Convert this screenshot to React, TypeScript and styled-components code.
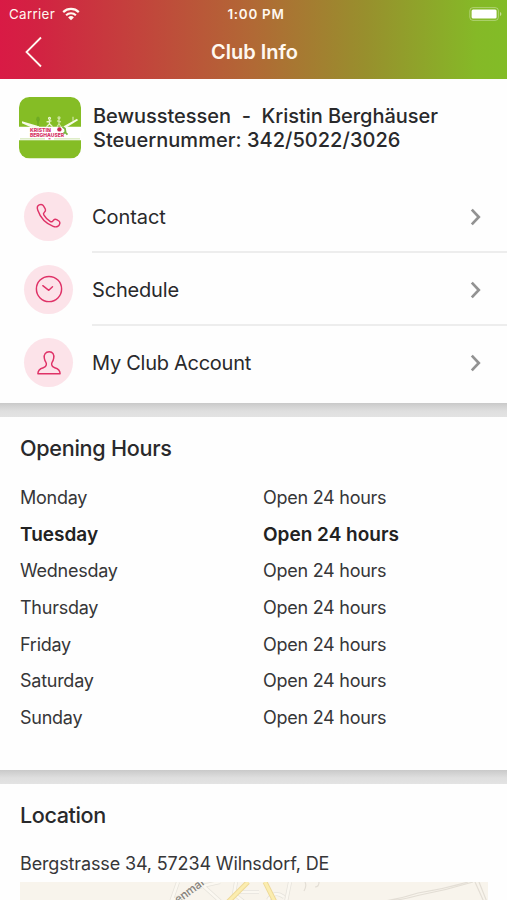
import React from "react";
import styled, { createGlobalStyle } from "styled-components";

const GlobalStyle = createGlobalStyle`
  * { box-sizing: border-box; }
  html, body { margin: 0; padding: 0; height: 900px; overflow: hidden; }
  body {
    background: #fff;
    color: #29292b;
    font-family: Inter, "Liberation Sans", sans-serif;
  }
`;

const Screen = styled.div`
  width: 507px;
  height: 900px;
  overflow: hidden;
  background: #fefefe;
`;

const Header = styled.header`
  height: 79px;
  color: #fff8f0;
  background: linear-gradient(90deg, #d91a45 0%, #d22342 8%, #b16935 50%, #988f2d 72%, #85b927 94%, #82bc27 100%);
`;

const StatusBar = styled.div`
  height: 27px;
  display: grid;
  grid-template-columns: 1fr auto 1fr;
  align-items: center;
  padding: 0 6px 0 9px;
  font-size: 13.4px;
  line-height: 26px;
`;

const Carrier = styled.div`
  display: flex;
  align-items: center;
  gap: 7px;
  letter-spacing: 0.3px;
`;

const Clock = styled.div`
  padding-left: 2px;
  font-weight: 600;
  letter-spacing: 0.75px;
`;

const BatterySlot = styled.div`
  display: flex;
  justify-content: flex-end;
  margin-right: -1px;
`;

const NavBar = styled.div`
  height: 52px;
  display: grid;
  grid-template-columns: 60px 1fr 60px;
  align-items: center;
`;

const BackButton = styled.button`
  border: 0;
  background: none;
  color: inherit;
  height: 50px;
  margin-bottom: 2px;
  padding: 0 0 0 24px;
  display: flex;
  align-items: center;
`;

const NavTitle = styled.h1`
  margin: 0;
  padding-left: 2px;
  text-align: center;
  font-size: 20px;
  font-weight: 600;
  line-height: 50px;
  margin-bottom: 2px;
`;

const Panel = styled.section<{ $height: number }>`
  height: ${(p) => p.$height}px;
`;

const Divider = styled.div`
  height: 14px;
  background: linear-gradient(#c9c9c9 0, #d2d2d2 3px, #dfdfdf 8px, #e3e3e3 14px);
`;

const ClubCard = styled.div`
  display: flex;
  gap: 12px;
  padding: 18px 0 0 19px;
  height: 100.5px;
`;

const ClubName = styled.div`
  padding-top: 7px;
  font-size: 20px;
  font-weight: 500;
  line-height: 24.4px;
  white-space: pre;
`;

const NameLine = styled.div<{ $spacing: number }>`
  letter-spacing: ${(p) => p.$spacing}px;
`;

const MenuRow = styled.a`
  height: 73.25px;
  display: flex;
  padding-left: 24px;
  gap: 19px;
  align-items: center;
`;

const IconDisc = styled.div`
  width: 49px;
  height: 49px;
  flex: none;
  border-radius: 50%;
  background: #fce3e9;
  display: flex;
  align-items: center;
  justify-content: center;
`;

const MenuBody = styled.div<{ $line: boolean; $spacing: number }>`
  flex: 1;
  align-self: stretch;
  display: flex;
  align-items: center;
  justify-content: space-between;
  padding: ${(p) => (p.$line ? "3px" : "0")} 26px 0 0;
  font-size: 20px;
  letter-spacing: ${(p) => p.$spacing}px;
  border-bottom: ${(p) => (p.$line ? "2px solid #ededed" : "none")};
`;

const Heading = styled.h2<{ $spacing: number }>`
  margin: 0;
  padding: 18px 20px 0;
  font-size: 21.6px;
  font-weight: 500;
  line-height: 27px;
  letter-spacing: ${(p) => p.$spacing}px;
`;

const HoursList = styled.div`
  padding: 17px 20px 0;
`;

const HoursRow = styled.div<{ $today: boolean }>`
  display: grid;
  grid-template-columns: 243px 1fr;
  height: 36.65px;
  line-height: 37px;
  font-size: ${(p) => (p.$today ? 19 : 18)}px;
  font-weight: ${(p) => (p.$today ? 600 : 400)};
  letter-spacing: ${(p) => (p.$today ? 0 : -0.26)}px;
  color: ${(p) => (p.$today ? "#222" : "#363638")};
`;

const Address = styled.div`
  padding: 22px 20px 0;
  height: 53px;
  font-size: 18px;
  line-height: 26px;
  letter-spacing: -0.14px;
  color: #363638;
`;

const MapView = styled.div`
  margin: 0 19px 0 20px;
  height: 18px;
  overflow: hidden;
  background: #f8f4ec;
  svg { display: block; }
`;

const Wifi = () => (
  <svg width="18" height="14" viewBox="0 0 18 14" fill="none" stroke="currentColor">
    <path d="M1.2 5.1a11.2 11.2 0 0 1 15.6 0" strokeWidth="2.2" />
    <path d="M4.1 8.2a7 7 0 0 1 9.8 0" strokeWidth="2.1" />
    <path d="M9 13.2 6.1 10.5a4.1 4.1 0 0 1 5.8 0Z" fill="currentColor" stroke="none" />
  </svg>
);

const Battery = () => (
  <svg width="33" height="14" viewBox="0 0 33 14">
    <rect x="0.8" y="0.6" width="28.6" height="12.8" rx="3.2" fill="none" stroke="#fff" strokeOpacity=".35" />
    <rect x="2.6" y="2.5" width="25" height="9" rx="1.5" fill="#fff" />
    <path d="M31 5v4q1.4-.6 1.4-2T31 5Z" fill="#fff" opacity=".5" />
  </svg>
);

const ClubLogo = () => (
  <svg width="62" height="61.5" viewBox="0 0 62 62" preserveAspectRatio="none">
    <defs>
      <clipPath id="logo-shape"><rect width="62" height="62" rx="10.5" /></clipPath>
    </defs>
    <g clipPath="url(#logo-shape)">
      <rect width="62" height="62" fill="#85bd25" />
      <path d="M0 30H62V43.5H0Z" fill="#fff" />
      <path d="M3 24.5 20 29.5V31H13L3 26.5ZM59 23.5 47 31h-5l16-9Z" fill="#f7fbe9" />
      <path d="M19 29v-6" stroke="#67a322" strokeWidth="1.1" />
      <ellipse cx="19" cy="22.5" rx="1.8" ry="2.8" fill="#6fab24" />
      <g stroke="#e9f5ce" strokeWidth="1.2" fill="none">
        <circle cx="30.5" cy="21.5" r="1" /><path d="M30.5 23v4l-3 3m3-3 3 3m-6-5 5-1" />
        <g opacity=".75"><circle cx="40" cy="21" r="1" /><path d="M40 22v5l-2 3m2-3 2 3m-4-6 4 1M54 20v4" /></g>
      </g>
      <g fill="#d53365" fontFamily="Inter, sans-serif" fontWeight="800" fontSize="5.2">
        <text x="11" y="35.1" textLength="21" lengthAdjust="spacingAndGlyphs">KRISTIN</text>
        <text x="11" y="40.3" textLength="34" lengthAdjust="spacingAndGlyphs">BERGHÄUSER</text>
      </g>
      <circle cx="40.4" cy="32.7" r="2.2" fill="#c72c50" />
      <path d="m43.5 30 2.5 2 .5 3-2 2m2-1 2 2" stroke="#79b63e" strokeWidth="1.8" fill="none" />
      <path d="M1 42.2h25m9 0h26" stroke="#b5d780" strokeWidth=".7" />
      <path d="M29.5 42.1h2" stroke="#d53365" />
    </g>
  </svg>
);

const strokeProps = {
  fill: "none",
  stroke: "#df3267",
  strokeWidth: 1.45,
  strokeLinecap: "round" as const,
  strokeLinejoin: "round" as const,
};

const Phone = () => (
  <svg width="28" height="28" viewBox="0 0 28 28" {...strokeProps}>
    <path d="M4.2 2.9C2.1 3.8 1.9 5.8 2.8 8.3c2.4 7 8.2 13.3 15.4 16.1 3.2 1.2 6-.1 6.6-2.8.3-1.2-.1-2-.9-2.6l-2.2-1.3c-1-.6-2.2-.5-3 .3l-1.1 1.2c-.7.7-1.7.8-2.5.2-2.7-1.7-4.7-3.9-6.3-6.6-.5-.8-.3-1.7.4-2.3.9-.7 1.6-1.5 1.3-2.8-.2-1.1-1.1-2.4-1.8-3.5-.9-1.5-2.5-2.1-4.5-1.3Z" />
  </svg>
);

const ClockIcon = () => (
  <svg width="28" height="28" viewBox="0 0 28 28" {...strokeProps}>
    <circle cx="14" cy="14" r="12.6" />
    <path d="m7.8 10.7 6 4.6 3.7-3.5" />
  </svg>
);

const Person = () => (
  <svg width="28" height="28" viewBox="0 0 28 28" {...strokeProps}>
    <path d="M14.2 2.7c-3.7 0-5.5 2.9-4.9 6.4.3 1.8.8 3 1.5 4 .6 1 .7 1.7.5 2.8-.2 1.4-1.2 2.3-3 2.8-3.4 1-5.4 2.4-5.4 6h22.2c0-3.6-2-5-5.4-6-1.8-.5-2.8-1.4-3-2.8-.2-1.1-.1-1.8.5-2.8.7-1 1.2-2.2 1.5-4 .6-3.5-.8-6.4-4.5-6.4Z" />
  </svg>
);

const Chevron = () => (
  <svg width="11" height="18" viewBox="0 0 11 18" fill="none" stroke="#929292" strokeWidth="2.7">
    <path d="m1.8 1.6 7 7.4-7 7.4" />
  </svg>
);

const MapDrawing = () => (
  <svg width="468" height="18" viewBox="0 0 468 18" fill="none">
    <g stroke="#e6e3dc" strokeWidth="4">
      <path d="M151 20 158 0M153 18 182 4 200 0M179 0l22 20M216 0l-2 12 10 8M219 10h20M248 18q6-10 16-3M266 20l4-20" />
    </g>
    <g stroke="#fbf8f1" strokeWidth="2.5">
      <path d="M151 20 158 0M153 18 182 4 200 0M179 0l22 20M216 0l-2 12 10 8M219 10h20M248 18q6-10 16-3M266 20l4-20" />
    </g>
    <path d="m208 20 20-20M245 0l10 20" stroke="#eed998" strokeWidth="5" />
    <path d="m208 20 20-20M245 0l10 20" stroke="#fbedaf" strokeWidth="3" />
    <g stroke="#e3ded5" strokeWidth="1.2">
      <path d="M285 0q2 4-1 9M299 0q0 5-4 5" />
      <path d="M358 20q22-3 40-9 26-4 50-11M362 20q20-2 38-7 27-5 53-13M455 0l9 20M459 0l8 20" />
    </g>
    <text x="158" y="22" transform="rotate(-36 158 22)" fill="#85827c" fontFamily="Inter, sans-serif" fontSize="11.5" fontWeight="500">enmar</text>
  </svg>
);

const menu = [
  { label: "Contact", icon: <Phone />, spacing: -0.08 },
  { label: "Schedule", icon: <ClockIcon />, spacing: -0.18 },
  { label: "My Club Account", icon: <Person />, spacing: -0.27 },
];

const days = ["Monday", "Tuesday", "Wednesday", "Thursday", "Friday", "Saturday", "Sunday"];

export default function App() {
  return (
    <Screen>
      <GlobalStyle />
      <Header>
        <StatusBar>
          <Carrier>Carrier <Wifi /></Carrier>
          <Clock>1:00 PM</Clock>
          <BatterySlot><Battery /></BatterySlot>
        </StatusBar>
        <NavBar>
          <BackButton aria-label="Back">
            <svg width="19" height="32" viewBox="0 0 19 32" fill="none" stroke="currentColor" strokeWidth="1.8">
              <path d="M17 1.5 2.5 16 17 30.5" />
            </svg>
          </BackButton>
          <NavTitle>Club Info</NavTitle>
        </NavBar>
      </Header>
      <Panel $height={324}>
        <ClubCard>
          <ClubLogo />
          <ClubName>
            <NameLine $spacing={-0.03}>{"Bewusstessen  -  Kristin Berghäuser"}</NameLine>
            <NameLine $spacing={0.03}>Steuernummer: 342/5022/3026</NameLine>
          </ClubName>
        </ClubCard>
        {menu.map((item, i) => (
          <MenuRow key={item.label}>
            <IconDisc>{item.icon}</IconDisc>
            <MenuBody $line={i < menu.length - 1} $spacing={item.spacing}>
              {item.label}
              <Chevron />
            </MenuBody>
          </MenuRow>
        ))}
      </Panel>
      <Divider />
      <Panel $height={353}>
        <Heading $spacing={-0.28}>Opening Hours</Heading>
        <HoursList>
          {days.map((day) => (
            <HoursRow key={day} $today={day === "Tuesday"}>
              <span>{day}</span>
              <span>Open 24 hours</span>
            </HoursRow>
          ))}
        </HoursList>
      </Panel>
      <Divider />
      <Panel $height={116}>
        <Heading $spacing={-0.4}>Location</Heading>
        <Address>Bergstrasse 34, 57234 Wilnsdorf, DE</Address>
        <MapView><MapDrawing /></MapView>
      </Panel>
    </Screen>
  );
}
